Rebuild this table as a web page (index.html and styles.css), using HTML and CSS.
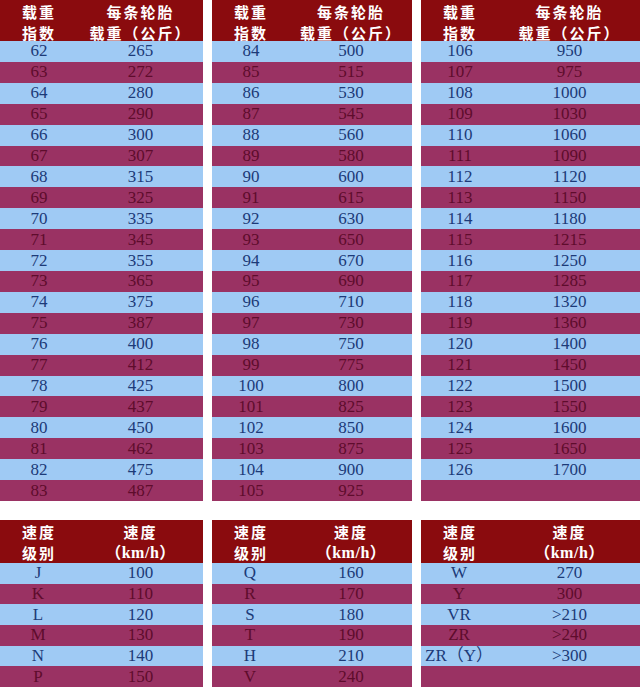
FILE: index.html
```html
<!DOCTYPE html>
<html lang="zh">
<head>
<meta charset="utf-8">
<title>载重指数与速度级别</title>
<link rel="stylesheet" href="styles.css">
</head>
<body>
<div class="page">
  <div class="tbl load">
    <div class="hd"><div><p>载重</p><p>指数</p></div><div><p>每条轮胎</p><p>载重（公斤）</p></div></div>
    <div class="body b22">
      <div class="r"><span>62</span><span>265</span></div>
      <div class="r"><span>63</span><span>272</span></div>
      <div class="r"><span>64</span><span>280</span></div>
      <div class="r"><span>65</span><span>290</span></div>
      <div class="r"><span>66</span><span>300</span></div>
      <div class="r"><span>67</span><span>307</span></div>
      <div class="r"><span>68</span><span>315</span></div>
      <div class="r"><span>69</span><span>325</span></div>
      <div class="r"><span>70</span><span>335</span></div>
      <div class="r"><span>71</span><span>345</span></div>
      <div class="r"><span>72</span><span>355</span></div>
      <div class="r"><span>73</span><span>365</span></div>
      <div class="r"><span>74</span><span>375</span></div>
      <div class="r"><span>75</span><span>387</span></div>
      <div class="r"><span>76</span><span>400</span></div>
      <div class="r"><span>77</span><span>412</span></div>
      <div class="r"><span>78</span><span>425</span></div>
      <div class="r"><span>79</span><span>437</span></div>
      <div class="r"><span>80</span><span>450</span></div>
      <div class="r"><span>81</span><span>462</span></div>
      <div class="r"><span>82</span><span>475</span></div>
      <div class="r"><span>83</span><span>487</span></div>
    </div>
  </div>
  <div class="tbl load">
    <div class="hd"><div><p>载重</p><p>指数</p></div><div><p>每条轮胎</p><p>载重（公斤）</p></div></div>
    <div class="body b22">
      <div class="r"><span>84</span><span>500</span></div>
      <div class="r"><span>85</span><span>515</span></div>
      <div class="r"><span>86</span><span>530</span></div>
      <div class="r"><span>87</span><span>545</span></div>
      <div class="r"><span>88</span><span>560</span></div>
      <div class="r"><span>89</span><span>580</span></div>
      <div class="r"><span>90</span><span>600</span></div>
      <div class="r"><span>91</span><span>615</span></div>
      <div class="r"><span>92</span><span>630</span></div>
      <div class="r"><span>93</span><span>650</span></div>
      <div class="r"><span>94</span><span>670</span></div>
      <div class="r"><span>95</span><span>690</span></div>
      <div class="r"><span>96</span><span>710</span></div>
      <div class="r"><span>97</span><span>730</span></div>
      <div class="r"><span>98</span><span>750</span></div>
      <div class="r"><span>99</span><span>775</span></div>
      <div class="r"><span>100</span><span>800</span></div>
      <div class="r"><span>101</span><span>825</span></div>
      <div class="r"><span>102</span><span>850</span></div>
      <div class="r"><span>103</span><span>875</span></div>
      <div class="r"><span>104</span><span>900</span></div>
      <div class="r"><span>105</span><span>925</span></div>
    </div>
  </div>
  <div class="tbl load">
    <div class="hd"><div><p>载重</p><p>指数</p></div><div><p>每条轮胎</p><p>载重（公斤）</p></div></div>
    <div class="body b22">
      <div class="r"><span>106</span><span>950</span></div>
      <div class="r"><span>107</span><span>975</span></div>
      <div class="r"><span>108</span><span>1000</span></div>
      <div class="r"><span>109</span><span>1030</span></div>
      <div class="r"><span>110</span><span>1060</span></div>
      <div class="r"><span>111</span><span>1090</span></div>
      <div class="r"><span>112</span><span>1120</span></div>
      <div class="r"><span>113</span><span>1150</span></div>
      <div class="r"><span>114</span><span>1180</span></div>
      <div class="r"><span>115</span><span>1215</span></div>
      <div class="r"><span>116</span><span>1250</span></div>
      <div class="r"><span>117</span><span>1285</span></div>
      <div class="r"><span>118</span><span>1320</span></div>
      <div class="r"><span>119</span><span>1360</span></div>
      <div class="r"><span>120</span><span>1400</span></div>
      <div class="r"><span>121</span><span>1450</span></div>
      <div class="r"><span>122</span><span>1500</span></div>
      <div class="r"><span>123</span><span>1550</span></div>
      <div class="r"><span>124</span><span>1600</span></div>
      <div class="r"><span>125</span><span>1650</span></div>
      <div class="r"><span>126</span><span>1700</span></div>
      <div class="r"><span></span><span></span></div>
    </div>
  </div>

  <div class="tbl speed">
    <div class="hd"><div><p>速度</p><p>级别</p></div><div><p>速度</p><p class="unit">（km/h）</p></div></div>
    <div class="body b6">
      <div class="r"><span>J</span><span>100</span></div>
      <div class="r"><span>K</span><span>110</span></div>
      <div class="r"><span>L</span><span>120</span></div>
      <div class="r"><span>M</span><span>130</span></div>
      <div class="r"><span>N</span><span>140</span></div>
      <div class="r"><span>P</span><span>150</span></div>
    </div>
  </div>
  <div class="tbl speed">
    <div class="hd"><div><p>速度</p><p>级别</p></div><div><p>速度</p><p class="unit">（km/h）</p></div></div>
    <div class="body b6">
      <div class="r"><span>Q</span><span>160</span></div>
      <div class="r"><span>R</span><span>170</span></div>
      <div class="r"><span>S</span><span>180</span></div>
      <div class="r"><span>T</span><span>190</span></div>
      <div class="r"><span>H</span><span>210</span></div>
      <div class="r"><span>V</span><span>240</span></div>
    </div>
  </div>
  <div class="tbl speed">
    <div class="hd"><div><p>速度</p><p>级别</p></div><div><p>速度</p><p class="unit">（km/h）</p></div></div>
    <div class="body b6">
      <div class="r"><span>W</span><span>270</span></div>
      <div class="r"><span>Y</span><span>300</span></div>
      <div class="r"><span>VR</span><span>&gt;210</span></div>
      <div class="r"><span>ZR</span><span>&gt;240</span></div>
      <div class="r"><span>ZR（Y）</span><span>&gt;300</span></div>
      <div class="r"><span></span><span></span></div>
    </div>
  </div>
</div>
</body>
</html>
```

FILE: styles.css
```css
html, body {
  margin: 0;
  padding: 0;
  background: #ffffff;
}
.page {
  width: 640px;
  height: 687px;
  overflow: hidden;
  display: grid;
  grid-template-columns: 203px 200px 219px;
  grid-template-rows: 501px 167px;
  column-gap: 9px;
  row-gap: 19px;
}
.tbl {
  display: flex;
  flex-direction: column;
}
.hd {
  background: #8a0b0e;
  color: #ffffff;
  display: grid;
  grid-template-columns: 78px 1fr;
  font-family: "Noto Sans CJK SC", sans-serif;
  font-weight: 700;
  font-size: 15px;
  letter-spacing: 2px;
  text-align: center;
  box-sizing: border-box;
  padding-top: 1px;
}
.hd p {
  margin: 0;
  height: 21px;
  line-height: 21px;
}
.load .hd { height: 41px; }
.speed .hd { height: 43px; padding-top: 1px; }
.hd .unit {
  font-family: "Liberation Serif", "Noto Sans CJK SC", serif;
  font-size: 16px;
  font-weight: 700;
  letter-spacing: 0.5px;
}
.body {
  display: grid;
  flex: 1;
}
.b22 { grid-template-rows: repeat(22, 1fr); }
.b6 { grid-template-rows: repeat(6, 1fr); }
.r {
  display: grid;
  grid-template-columns: 78px 1fr;
  align-items: center;
  text-align: center;
  font-family: "Liberation Serif", "Noto Sans CJK SC", serif;
  font-size: 17px;
  line-height: 18px;
}
.r:nth-child(odd) {
  background: #9fcaf4;
  color: #1c3a78;
}
.r:nth-child(even) {
  background: #9a3263;
  color: #5e0c2c;
}
.speed .r span:first-child {
  padding-right: 2px;
}
```
